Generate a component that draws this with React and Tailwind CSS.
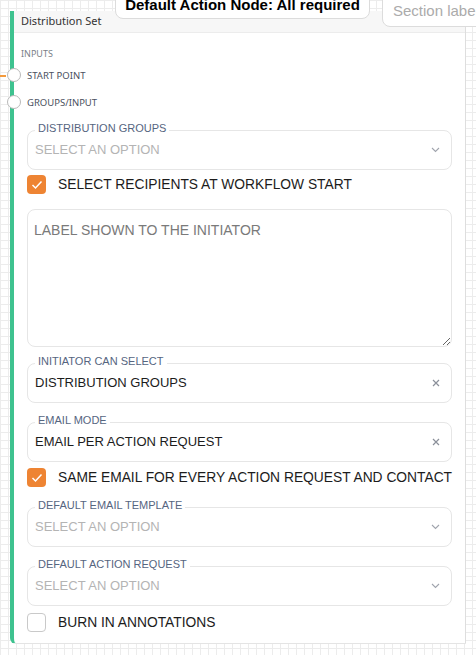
import React from "react";

const sans = "font-['Liberation_Sans',Arial,sans-serif]";

function Chevron() {
  return (
    <svg width="9" height="6" viewBox="0 0 9 6" className="shrink-0">
      <polyline points="1,1 4.5,4.5 8,1" fill="none" stroke="#a0a4ad" strokeWidth="1.1" />
    </svg>
  );
}

function Cross() {
  return (
    <svg width="8" height="8" viewBox="0 0 8 8" className="shrink-0">
      <path d="M1 1 L7 7 M7 1 L1 7" stroke="#8b909a" strokeWidth="1.2" />
    </svg>
  );
}

function Field({ label, value, placeholder, icon, className = "" }) {
  return (
    <div className={`relative h-[40px] rounded-lg border border-[#e6e6e6] flex items-center pl-[7px] pr-[11px] ${className}`}>
      <span className="absolute left-[7px] top-[-10px] bg-white px-[3px] text-[11px] leading-[14px] text-[#56657f]">
        {label}
      </span>
      <span className={`flex-1 text-[13px] leading-[16px] ${value ? "text-[#1c1c1c]" : "text-[#b4b4b4]"}`}>
        {value || placeholder}
      </span>
      {icon === "chevron" ? <Chevron /> : <Cross />}
    </div>
  );
}

function Check({ checked, label, className = "" }) {
  return (
    <div className={`flex items-center h-[19px] ${className}`}>
      {checked ? (
        <span className="shrink-0 w-[19px] h-[19px] rounded-[4px] bg-[#ee8433] flex items-center justify-center">
          <svg width="12" height="10" viewBox="0 0 12 10">
            <polyline points="1.5,5 4.5,8 10.5,1.5" fill="none" stroke="white" strokeWidth="1.5" />
          </svg>
        </span>
      ) : (
        <span className="shrink-0 w-[19px] h-[19px] rounded-[4px] border border-[#c9c9c9] bg-white" />
      )}
      <span className="ml-[12px] whitespace-nowrap text-[13.8px] leading-[16px] text-[#1c1c1c]">{label}</span>
    </div>
  );
}

function Handle({ top }) {
  return (
    <span
      className="absolute left-[-7px] w-[14px] h-[14px] rounded-full bg-white border border-[#b9b9b9]"
      style={{ top }}
    />
  );
}

export default function App() {
  return (
    <div
      className={`relative w-[476px] h-[655px] overflow-hidden bg-white ${sans} bg-[linear-gradient(to_right,#ececec_1px,transparent_1px),linear-gradient(to_bottom,#ececec_1px,transparent_1px)] bg-[size:8px_8px]`}
    >
      {/* edge coming into the start point */}
      <span className="absolute left-0 top-[75px] w-[6px] h-[1.5px] bg-[#f39a3d]" />

      {/* node card */}
      <div className="absolute left-[10px] top-[11px] w-[456px] h-[633px] bg-white rounded-bl-[6px] border-l-[4px] border-l-[#3ec28f] border-r border-r-[#dedede] border-b border-b-[#e4e4e4] flex flex-col">
        <div className="h-[23px] bg-[#f7f7f7] border-b border-[#ececec] flex items-center pl-[7px] text-[11px] text-[#333] font-['Noto_Sans',sans-serif]">
          Distribution Set
        </div>

        <div className="relative flex flex-col px-[13px] pt-[14px] pb-[11px]">
          <div className="ml-[-6px] text-[9px] leading-[14px] text-[#7b7f88] font-['Noto_Sans',sans-serif]">INPUTS</div>
          <div className="mt-[8px] text-[9.5px] leading-[14px] text-[#4b5060] font-['Noto_Sans',sans-serif]">START POINT</div>
          <div className="mt-[13px] text-[9.5px] leading-[14px] text-[#4b5060] font-['Noto_Sans',sans-serif]">GROUPS/INPUT</div>
          <Handle top="35px" />
          <Handle top="62px" />

          <Field label="DISTRIBUTION GROUPS" placeholder="SELECT AN OPTION" icon="chevron" className="mt-[20px]" />
          <Check checked label="SELECT RECIPIENTS AT WORKFLOW START" className="mt-[5px]" />

          <textarea
            readOnly
            placeholder="LABEL SHOWN TO THE INITIATOR"
            className="mt-[15px] h-[138px] rounded-lg border border-[#e6e6e6] px-[6px] py-[12px] text-[14px] leading-[16px] placeholder:text-[#7a7a7a] outline-none resize-y"
          />

          <Field label="INITIATOR CAN SELECT" value="DISTRIBUTION GROUPS" icon="cross" className="mt-[16px]" />
          <Field label="EMAIL MODE" value="EMAIL PER ACTION REQUEST" icon="cross" className="mt-[19px]" />
          <Check checked label="SAME EMAIL FOR EVERY ACTION REQUEST AND CONTACT" className="mt-[6px]" />
          <Field label="DEFAULT EMAIL TEMPLATE" placeholder="SELECT AN OPTION" icon="chevron" className="mt-[20px]" />
          <Field label="DEFAULT ACTION REQUEST" placeholder="SELECT AN OPTION" icon="chevron" className="mt-[19px]" />
          <Check label="BURN IN ANNOTATIONS" className="mt-[7px]" />
        </div>
      </div>

      {/* floating labels over the canvas */}
      <div className="absolute left-[115px] top-[-12px] w-[255px] h-[31px] bg-white border border-[#dcdcdc] rounded-b-[8px] flex items-end justify-center pb-[5px]">
        <span className="text-[15px] leading-[17px] font-bold text-black">Default Action Node: All required</span>
      </div>
      <div className="absolute left-[382px] top-[-10px] w-[120px] h-[37px] bg-white border border-[#dcdcdc] rounded-bl-[8px] flex items-end pl-[10px] pb-[7px]">
        <span className="text-[15px] leading-[17px] text-[#ababab] whitespace-nowrap">Section label</span>
      </div>
    </div>
  );
}
